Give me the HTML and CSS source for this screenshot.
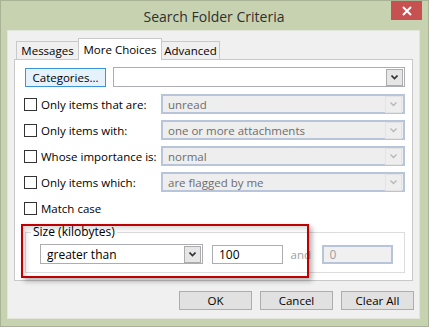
FILE: index.html
```html
<!DOCTYPE html>
<html lang="en">
<head>
  <meta charset="UTF-8">
  <title>Search Folder Criteria</title>
  <link rel="stylesheet" href="styles.css">
</head>
<body>
  <div class="window">
    <div class="titlebar">
      <span class="title">Search Folder Criteria</span>
      <button class="close">
        <svg width="10" height="10" viewBox="0 0 10 10"><path d="M1 1 L9 9 M9 1 L1 9" stroke="#fff" stroke-width="2"/></svg>
      </button>
    </div>

    <div class="client">
      <div class="tabs">
        <div class="tab">Messages</div>
        <div class="tab active">More Choices</div>
        <div class="tab last">Advanced</div>
      </div>

      <div class="panel">
        <div class="row first">
          <button class="btn btn-focus">Categories...</button>
          <div class="combo">
            <span class="combo-text"></span>
            <span class="arrow"><svg width="7" height="5" viewBox="0 0 7 5"><polyline points="0.5,0.5 3.5,3.5 6.5,0.5" fill="none" stroke="#333" stroke-width="1.6"/></svg></span>
          </div>
        </div>

        <div class="row">
          <label class="check"><span class="box"></span>Only items that are:</label>
          <div class="combo disabled">
            <span class="combo-text">unread</span>
            <span class="arrow"><svg width="7" height="5" viewBox="0 0 7 5"><polyline points="0.5,0.5 3.5,3.5 6.5,0.5" fill="none" stroke="#b8b8b8" stroke-width="1.4"/></svg></span>
          </div>
        </div>

        <div class="row">
          <label class="check"><span class="box"></span>Only items with:</label>
          <div class="combo disabled">
            <span class="combo-text">one or more attachments</span>
            <span class="arrow"><svg width="7" height="5" viewBox="0 0 7 5"><polyline points="0.5,0.5 3.5,3.5 6.5,0.5" fill="none" stroke="#b8b8b8" stroke-width="1.4"/></svg></span>
          </div>
        </div>

        <div class="row">
          <label class="check"><span class="box"></span>Whose importance is:</label>
          <div class="combo disabled">
            <span class="combo-text">normal</span>
            <span class="arrow"><svg width="7" height="5" viewBox="0 0 7 5"><polyline points="0.5,0.5 3.5,3.5 6.5,0.5" fill="none" stroke="#b8b8b8" stroke-width="1.4"/></svg></span>
          </div>
        </div>

        <div class="row">
          <label class="check"><span class="box"></span>Only items which:</label>
          <div class="combo disabled">
            <span class="combo-text">are flagged by me</span>
            <span class="arrow"><svg width="7" height="5" viewBox="0 0 7 5"><polyline points="0.5,0.5 3.5,3.5 6.5,0.5" fill="none" stroke="#b8b8b8" stroke-width="1.4"/></svg></span>
          </div>
        </div>

        <div class="row">
          <label class="check"><span class="box"></span>Match case</label>
        </div>

        <fieldset class="size">
          <legend>Size (kilobytes)</legend>
          <div class="size-row">
            <div class="combo combo-size">
              <span class="combo-text dark">greater than</span>
              <span class="arrow"><svg width="7" height="5" viewBox="0 0 7 5"><polyline points="0.5,0.5 3.5,3.5 6.5,0.5" fill="none" stroke="#333" stroke-width="1.6"/></svg></span>
            </div>
            <div class="field">100</div>
            <span class="and">and</span>
            <div class="field field-off">0</div>
          </div>
        </fieldset>

        <div class="highlight"></div>
      </div>

      <div class="actions">
        <button class="btn">OK</button>
        <button class="btn">Cancel</button>
        <button class="btn">Clear All</button>
      </div>
    </div>
  </div>
</body>
</html>
```

FILE: styles.css
```css
body {
  margin: 0;
  font-family: 'Open Sans', 'Liberation Sans', sans-serif;
  font-size: 11.5px;
  color: #000;
  background: #c6d2b0;
}

.window {
  width: 429px;
  height: 327px;
  box-sizing: border-box;
  border: 1px solid #a7b394;
  background: #c6d2b0;
  padding: 0 7px 0 6px;
}

.titlebar {
  height: 29px;
  display: grid;
  grid-template-columns: 1fr auto 1fr;
}

.title {
  grid-column: 2;
  align-self: center;
  font-size: 14px;
  color: #303030;
  padding-top: 1px;
}

.close {
  grid-column: 3;
  justify-self: end;
  align-self: start;
  width: 31px;
  height: 19px;
  margin-right: -1px;
  border: none;
  padding: 0;
  background: #c75050;
  display: flex;
  align-items: center;
  justify-content: center;
}

.client {
  height: 289px;
  box-sizing: border-box;
  border: 1px solid #e2e6da;
  background: #f0f0f0;
  margin-right: 1px;
}

/* tabs */
.tabs {
  display: flex;
  align-items: flex-end;
  padding: 7px 0 0 8px;
  height: 21px;
}

.tab {
  height: 17px;
  border: 1px solid #c9c9c9;
  border-bottom: none;
  background: #f0f0f0;
  display: flex;
  align-items: center;
  justify-content: center;
  width: 61px;
  margin-right: -1px;
  white-space: nowrap;
}

.tab.active {
  position: relative;
  z-index: 1;
  height: 22px;
  width: 84px;
  margin-bottom: -1px;
  background: #fff;
  padding-bottom: 1px;
  box-sizing: border-box;
}

.tab.last {
  width: 57px;
}

.panel {
  position: relative;
  margin: 0 6px;
  height: 222px;
  box-sizing: border-box;
  border: 1px solid #c9c9c9;
  background: #fff;
  padding: 7px 7px 0 10px;
  display: flex;
  flex-direction: column;
  gap: 6px;
}

.row {
  display: flex;
  align-items: center;
  height: 20px;
}

.row.first {
  margin-bottom: 1px;
  gap: 7px;
}

.btn {
  font-family: inherit;
  font-size: 11.5px;
  color: #000;
  width: 73px;
  height: 19px;
  padding: 0;
  background: #e1e1e1;
  border: 1px solid #adadad;
}

.btn-focus {
  width: 81px;
  background: #e5f1fb;
  border-color: #3c94dd;
  margin-top: 1px;
}

.combo {
  flex: 1;
  height: 20px;
  box-sizing: border-box;
  border: 1px solid #abadb3;
  background: #fff;
  display: flex;
  align-items: center;
  padding: 0 1px 0 6px;
}

.combo-text {
  flex: 1;
  color: #6d6d6d;
}

.combo-text.dark {
  color: #000;
  font-size: 12px;
}

.arrow {
  width: 15px;
  height: 15px;
  border: 1px solid #acacac;
  background: #e6e6e6;
  display: flex;
  align-items: center;
  justify-content: center;
}

.combo.disabled {
  border: 2px solid #b7c4da;
  background: #eeeeee;
  padding-left: 5px;
}

.combo.disabled .arrow {
  background: #eeeeee;
  border-color: #e3e3e3;
}

.check {
  flex: none;
  width: 136px;
  display: flex;
  align-items: center;
  font-size: 11.5px;
  white-space: nowrap;
}

.box {
  flex: none;
  width: 11px;
  height: 11px;
  border: 1px solid #333;
  background: #fff;
  margin: 0 4px 0 -1px;
}

/* size group */
.size {
  margin: 1px 0 0;
  padding: 0 11px 8px 14px;
  border: 1px solid #dcdcdc;
  min-width: 0;
}

.size legend {
  padding: 0 2px;
  margin-left: -9px;
  line-height: 14px;
  font-size: 12px;
}

.size-row {
  display: flex;
  align-items: center;
  margin-top: 5px;
  height: 20px;
}

.combo-size {
  flex: none;
  width: 163px;
}

.field {
  width: 71px;
  height: 19px;
  box-sizing: border-box;
  border: 1px solid #abadb3;
  background: #fff;
  margin-left: 9px;
  padding-left: 6px;
  display: flex;
  align-items: center;
  font-size: 12px;
}

.and {
  margin-left: 8px;
  color: #a0a0a0;
  width: 24px;
}

.field-off {
  margin-left: 8px;
  border: 2px solid #b7c4da;
  background: #f0f0f0;
  color: #a0a0a0;
  padding-left: 5px;
}

.highlight {
  position: absolute;
  left: 6px;
  top: 164px;
  width: 284px;
  height: 50px;
  border: 2px solid #c00000;
  box-shadow: 3px 3px 5px rgba(0, 0, 0, 0.3), inset 3px 3px 5px rgba(0, 0, 0, 0.15);
  pointer-events: none;
}

.actions {
  display: flex;
  justify-content: flex-end;
  gap: 8px;
  margin-top: 10px;
  padding-right: 5px;
}
```
